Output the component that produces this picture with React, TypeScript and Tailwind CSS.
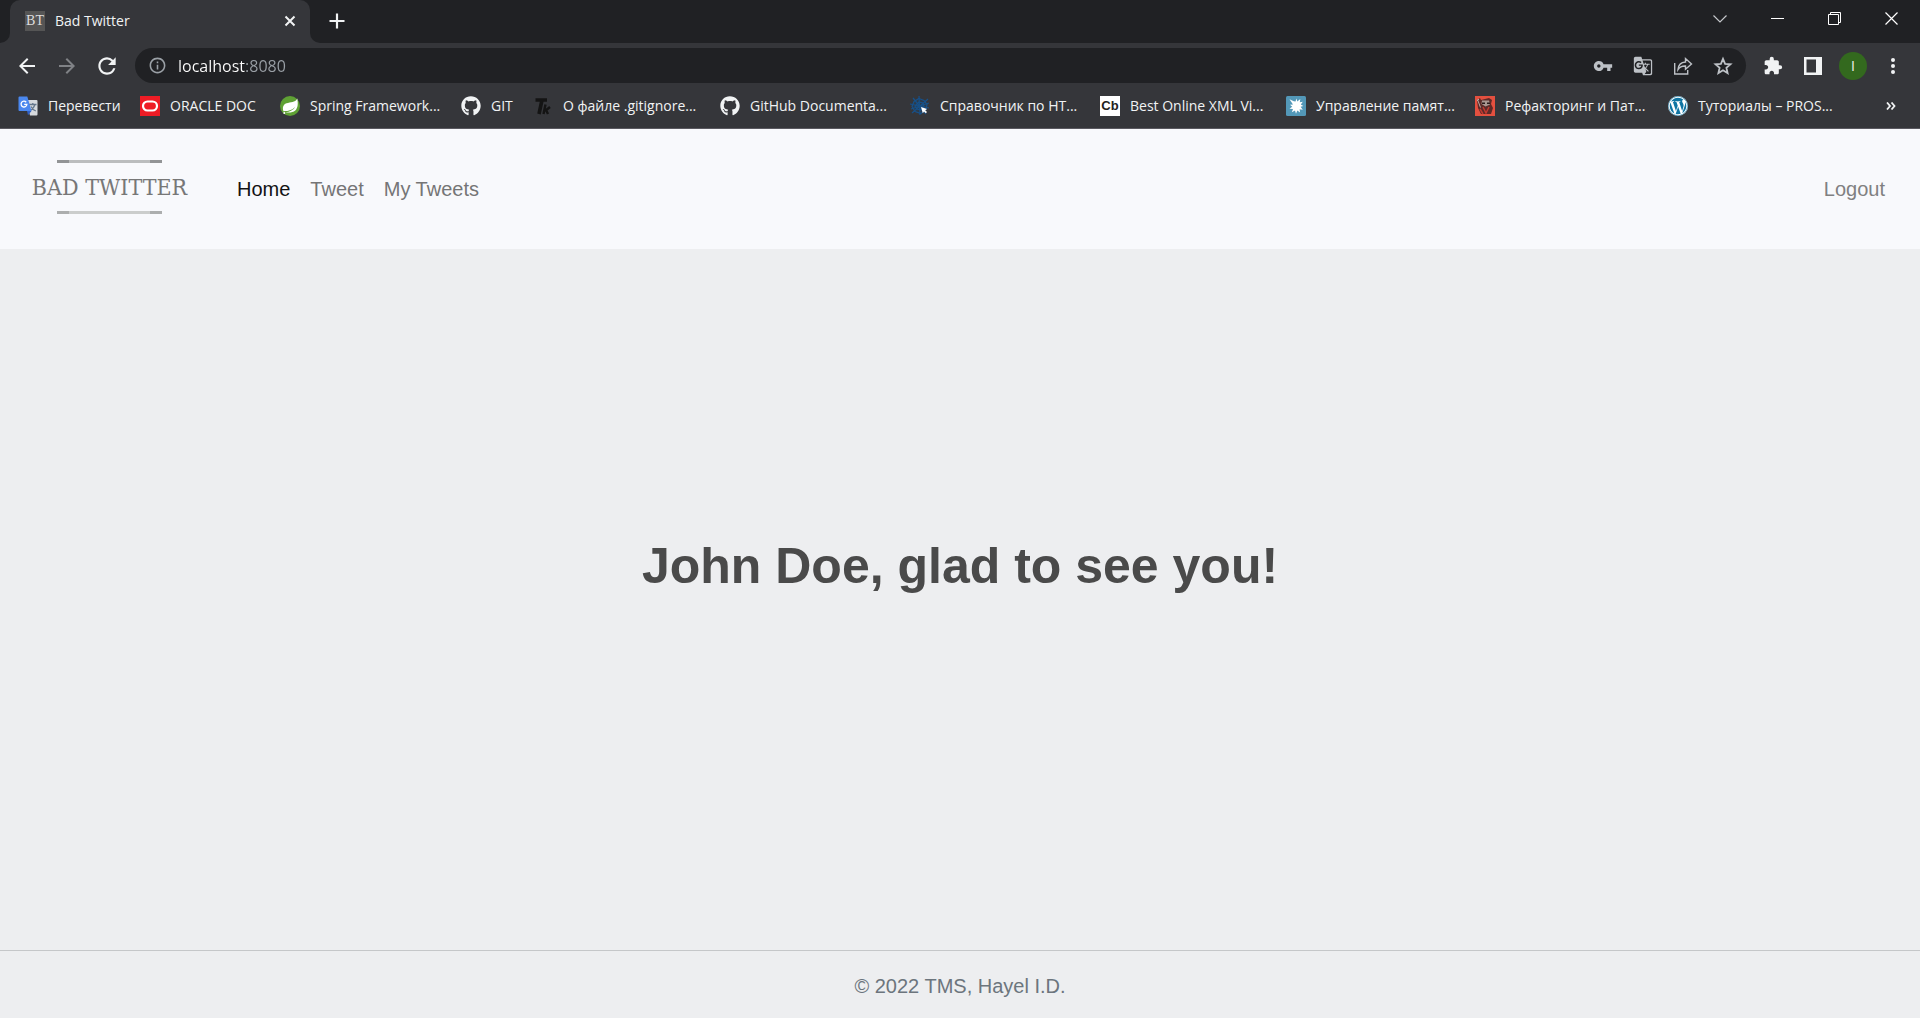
import type { ReactNode } from "react";
import {
  MdArrowBack,
  MdArrowForward,
  MdExtension,
  MdGTranslate,
  MdInfoOutline,
  MdRefresh,
  MdVpnKey,
} from "react-icons/md";
import { FaGithub, FaWordpress } from "react-icons/fa";

const uiFont = "font-['Open_Sans','Noto_Sans',sans-serif]";

function TranslateIcon() {
  return (
    <svg width="20" height="20" viewBox="0 0 20 20" aria-hidden="true">
      <path d="M8 4h10.500a1 1 0 0 1 1 1v13.500a1 1 0 0 1-1 1H12z" fill="#d6d9dd" />
      <path d="M11 8.500h7.500M14.800 7v1.500M17 8.500c-.8 3-2.800 5-5 6.500M13 10.500c1 2 2.800 3.700 4.800 4.500" fill="none" stroke="#66788c" strokeWidth="1.300" />
      <path d="M1.500.5h7.800L13.500 15H1.500a1 1 0 0 1-1-1V1.500a1 1 0 0 1 1-1z" fill="#4a87ee" />
      <path d="M9 15h4.500L10 19.300z" fill="#2f5fc4" />
      <path d="M8.200 6.200A2.900 2.900 0 1 0 8.900 8.300H6.200" fill="none" stroke="#fff" strokeWidth="1.300" />
    </svg>
  );
}

function OracleIcon() {
  return (
    <svg width="20" height="20" viewBox="0 0 20 20" aria-hidden="true">
      <rect width="20" height="20" fill="#ee1c25" />
      <rect x="3" y="5.500" width="14" height="9" rx="4.500" fill="none" stroke="#fff" strokeWidth="2.200" />
    </svg>
  );
}

function SpringIcon() {
  return (
    <svg width="20" height="20" viewBox="0 0 20 20" aria-hidden="true">
      <circle cx="10" cy="10" r="10" fill="#5fa134" />
      <path d="M17.300 2.500c.8 4.500.9 9.300-2 12-2.500 2.300-6.500 2.300-9.800 1.800 4.500-.5 8-2.300 9.800-5.500-2.800 3-6 4.300-11.800 4.500C2.200 12 3 8.500 6.500 7.300c4-1.300 8.500-.5 10.800-4.800z" fill="#fff" />
      <circle cx="4.300" cy="17" r="1" fill="#fff" />
    </svg>
  );
}

function TkIcon() {
  return (
    <svg width="20" height="20" viewBox="0 0 20 20" fill="none" stroke="#141414" aria-hidden="true">
      <path d="M2.500 4H14M9 4L6 18" strokeWidth="3.600" />
      <path d="M12.500 8.500l-2 9.500M17 11l-5 4M13 14l2 4" strokeWidth="2.400" />
    </svg>
  );
}

function WebIcon() {
  return (
    <svg width="20" height="20" viewBox="0 0 20 20" aria-hidden="true">
      <g fill="none" stroke="#17518a" strokeWidth="1.200">
        <path d="M9 0l1 19M0 8l19 4M3 2l13 16M18 3L2 17M1 13L19 7" />
        <path d="M9 2.500l5 2 3 4-1 5-5 4-6-2-3-5 2-5z" fill="#174a7b" fillOpacity=".25" />
        <path d="M9 6l4 1 1 4-3 3-4-1-2-3z" />
      </g>
      <path d="M11 11l6 2-1.800 1.200 1.800 1.800-1.200 1.200-1.800-1.800-1.200 1.800z" fill="#fff" />
    </svg>
  );
}

function CbIcon() {
  return (
    <span aria-hidden="true" className="flex h-5 w-5 items-center justify-center bg-white font-['Liberation_Sans',sans-serif] text-[13px] font-bold text-[#222]">
      Cb
    </span>
  );
}

function SplashIcon() {
  return (
    <svg width="20" height="20" viewBox="0 0 20 20" aria-hidden="true">
      <rect width="20" height="20" rx="1.500" fill="#5398b8" />
      <path d="M9.500 5.500l1-3 .8 3 3-2.500-.5 3.200 3-.5-2 2.800 2.500 1.500-2.700.7 2.200 3-3.200-.5.5 3.300-2.800-2-1.300 3.300-1-3.200-3.200 1.700 1.200-3.300-3.500-.3 2.700-2-2.200-2 3-.3L3.500 3.200l4.300 2z" fill="#fff" />
    </svg>
  );
}

function RaccoonIcon() {
  return (
    <svg width="20" height="20" viewBox="0 0 20 20" aria-hidden="true">
      <rect width="20" height="20" fill="#e4503f" />
      <path d="M2 4l3-2 1 2 4-1 4-1 3 2-1 4 2 4-2 6H6L3 12z" fill="#5c2a28" />
      <path d="M7 4.500h7l1 4-4.500 2L6.500 8z" fill="#a89690" />
      <path d="M7 6.500h3v1.500H7zM12 6.500h3v1.500h-3z" fill="#2a1a1a" />
      <path d="M8 11l3 6 3-6M5 13l3 5" stroke="#c23a31" strokeWidth="1.500" fill="none" />
      <path d="M2.500 3.500l3 8M2 5l2-2" stroke="#b9aaa5" fill="none" />
    </svg>
  );
}

function WordpressIcon() {
  return (
    <span className="flex h-5 w-5 items-center justify-center rounded-full bg-white text-[#0f75a3]">
      <FaWordpress size={20} aria-hidden="true" />
    </span>
  );
}

const github = <FaGithub size={20} aria-hidden="true" />;

const bookmarks: { label: string; width: string; icon: ReactNode }[] = [
  { label: "Перевести", width: "w-[102px]", icon: <TranslateIcon /> },
  { label: "ORACLE DOC", width: "w-[120px]", icon: <OracleIcon /> },
  { label: "Spring Framework...", width: "w-[161px]", icon: <SpringIcon /> },
  { label: "GIT", width: "w-[52px]", icon: github },
  { label: "О файле .gitignore...", width: "w-[167px]", icon: <TkIcon /> },
  { label: "GitHub Documenta...", width: "w-[170px]", icon: github },
  { label: "Справочник по HT...", width: "w-[170px]", icon: <WebIcon /> },
  { label: "Best Online XML Vi...", width: "w-[166px]", icon: <CbIcon /> },
  { label: "Управление памят...", width: "w-[169px]", icon: <SplashIcon /> },
  { label: "Рефакторинг и Пат...", width: "w-[173px]", icon: <RaccoonIcon /> },
  { label: "Туториалы – PROS...", width: "w-[170px]", icon: <WordpressIcon /> },
];

function IconButton({ label, children }: { label: string; children: ReactNode }) {
  return (
    <button type="button" aria-label={label} className="flex h-5 w-5 items-center justify-center">
      {children}
    </button>
  );
}

function TabStrip() {
  return (
    <div className="flex h-[43px] bg-[#202124]">
      <div className="flex w-[10px] bg-[#35363a]">
        <div className="w-full rounded-br-[10px] bg-[#202124]" />
      </div>
      <div className="flex w-[300px] items-center rounded-t-[10px] bg-[#35363a] pr-[10px] pb-0.5 pl-[15px]">
        <span aria-hidden="true" className="flex h-5 w-5 items-center justify-center bg-[#555] font-['Liberation_Serif',serif] text-[14px] text-[#ddd]">
          BT
        </span>
        <span className="ml-[10px] flex-1 text-[14px] text-[#f1f3f4]">Bad Twitter</span>
        <IconButton label="Close tab">
          <svg width="12" height="12" viewBox="0 0 12 12" stroke="#f1f3f4" strokeWidth="2">
            <path d="M1.500 1.500l9 9M10.500 1.500l-9 9" />
          </svg>
        </IconButton>
      </div>
      <div className="flex w-[10px] bg-[#35363a]">
        <div className="w-full rounded-bl-[10px] bg-[#202124]" />
      </div>
      <div className="ml-[7px] flex items-center pb-0.5">
        <IconButton label="New tab">
          <svg width="16" height="16" viewBox="0 0 16 16" stroke="#f1f3f4" strokeWidth="2.200">
            <path d="M8 .5v15M.5 8h15" />
          </svg>
        </IconButton>
      </div>
      <div className="mr-[19px] ml-auto flex h-9 items-center gap-[37px] pt-px">
        <IconButton label="Search tabs">
          <svg width="14" height="8" viewBox="0 0 14 8" fill="none" stroke="#c4c7cb" strokeWidth="1.200">
            <path d="M.5 .5L7 7l6.500-6.500" />
          </svg>
        </IconButton>
        <IconButton label="Minimize">
          <svg width="13" height="1" viewBox="0 0 13 1"><rect width="13" height="1" fill="#fff" /></svg>
        </IconButton>
        <IconButton label="Restore">
          <svg width="13" height="13" viewBox="0 0 13 13" fill="none" stroke="#fff">
            <path d="M.5 2.500h10v10H.5zM2.500 2.500v-2h10v10h-2" />
          </svg>
        </IconButton>
        <IconButton label="Close window">
          <svg width="13" height="13" viewBox="0 0 13 13" stroke="#fff" strokeWidth="1.200">
            <path d="M.5.5l12 12M12.500.5l-12 12" />
          </svg>
        </IconButton>
      </div>
    </div>
  );
}

function Toolbar() {
  return (
    <div className="flex h-[45px] items-center bg-[#35363a] px-[17px]">
      <div className="flex gap-5 text-[#f1f3f4]">
        <IconButton label="Back"><MdArrowBack size={24} className="shrink-0" /></IconButton>
        <IconButton label="Forward"><MdArrowForward size={24} className="shrink-0 text-[#808286]" /></IconButton>
        <IconButton label="Reload"><MdRefresh size={26} className="shrink-0" /></IconButton>
      </div>
      <div className="mr-[17px] ml-[18px] flex h-[35px] flex-1 items-center rounded-full bg-[#202124] px-[13px]">
        <MdInfoOutline size={19} className="text-[#9aa0a6]" aria-hidden="true" />
        <input
          type="text"
          aria-label="Address"
          defaultValue="localhost:8080"
          className="ml-[11px] min-w-0 flex-1 bg-[linear-gradient(to_right,#ffffff_67px,#9aa0a6_67px)] bg-clip-text text-[16px] text-transparent outline-none"
        />
        <div className="flex gap-5 text-[#bdc1c6]">
          <IconButton label="Passwords"><MdVpnKey size={20} /></IconButton>
          <IconButton label="Translate page"><MdGTranslate size={20} /></IconButton>
          <IconButton label="Share">
            <svg width="20" height="20" viewBox="0 0 20 20" fill="none" stroke="currentColor" strokeWidth="1.400">
              <path d="M1.700 7v11h13v-4M5 13.500c.4-5 3-7.200 7.500-7.500V2.500L18.500 8l-6 5.200V10c-3.500-.2-5.700.8-7.500 3.500z" />
            </svg>
          </IconButton>
          <IconButton label="Bookmark">
            <svg width="20" height="20" viewBox="0 0 20 20" fill="none" stroke="currentColor" strokeWidth="1.800">
              <path d="M10 2.800l2.100 5 5.400.5-4.100 3.500 1.200 5.300L10 14.300l-4.600 2.800 1.200-5.300-4.100-3.500 5.400-.5z" />
            </svg>
          </IconButton>
        </div>
      </div>
      <div className="flex items-center gap-5 text-[#f1f3f4]">
        <IconButton label="Extensions"><MdExtension size={20} /></IconButton>
        <IconButton label="Side panel">
          <svg width="18" height="18" viewBox="0 0 18 18" fill="currentColor">
            <path fillRule="evenodd" d="M0 0h18v18H0zM2.500 2.500v13H12v-13z" />
          </svg>
        </IconButton>
        <button type="button" aria-label="Profile" className="-mx-1 flex h-7 w-7 items-center justify-center rounded-full bg-[#33691e] text-[14px]">
          I
        </button>
        <IconButton label="Menu">
          <svg width="4" height="16" viewBox="0 0 4 16" fill="currentColor">
            <circle cx="2" cy="2" r="2" /><circle cx="2" cy="8" r="2" /><circle cx="2" cy="14" r="2" />
          </svg>
        </IconButton>
      </div>
    </div>
  );
}

function BookmarksBar() {
  return (
    <div className="flex h-[41px] items-center gap-5 overflow-hidden border-b border-[#5a5960] bg-[#35363a] pr-[24px] pb-[5px] pl-[18px] text-[14px] whitespace-nowrap text-[#f1f3f4]">
      {bookmarks.map((b) => (
        <a key={b.label} href="#" className={`flex shrink-0 items-center gap-[10px] ${b.width}`}>
          <span className="flex h-5 w-5 items-center justify-center">{b.icon}</span>
          {b.label}
        </a>
      ))}
      <button type="button" aria-label="More bookmarks" className="ml-auto">
        <svg width="10" height="8" viewBox="0 0 10 8" fill="none" stroke="#f1f3f4" strokeWidth="1.800">
          <path d="M1 .5L4 4 1 7.500M5.500.5l3 3.500-3 3.500" />
        </svg>
      </button>
    </div>
  );
}

function Logo() {
  return (
    <a href="#" className="flex w-[151px] flex-col items-center pb-1 text-[#777]">
      <span className="flex h-[3px] w-[105px] bg-[#bbbdbe]">
        <span className="h-full w-3 bg-[#929496]" />
        <span className="ml-auto h-full w-3 bg-[#929496]" />
      </span>
      <span className="my-2 font-['DejaVu_Serif_Condensed','DejaVu_Serif',serif] text-[23px] leading-8 whitespace-nowrap">BAD TWITTER</span>
      <span className="flex h-[3px] w-[105px] bg-[#cbcdcc]">
        <span className="h-full w-3 bg-[#acaeae]" />
        <span className="ml-auto h-full w-3 bg-[#acaeae]" />
      </span>
    </a>
  );
}

export default function App() {
  return (
    <div className="flex min-h-screen flex-col bg-[#edeef0] font-['Liberation_Sans',Arial,sans-serif]">
      <div className={uiFont}>
        <TabStrip />
        <Toolbar />
        <BookmarksBar />
      </div>
      <header className="flex h-[120px] items-center bg-[#f8f9fc] pr-[35px] pl-[34px] text-[20px] text-[#757576]">
        <Logo />
        <nav className="ml-[52px] flex flex-1 gap-5">
          <a href="#" aria-current="page" className="text-[#121213]">Home</a>
          <a href="#">Tweet</a>
          <a href="#">My Tweets</a>
          <a href="#" className="ml-auto text-[#808081]">Logout</a>
        </nav>
      </header>
      <main className="flex flex-1 items-center justify-center pb-[68px]">
        <h1 className="text-[50px] leading-[60px] font-bold text-[#4a4a4a]">John Doe, glad to see you!</h1>
      </main>
      <footer className="border-t border-[#c5c7c9] pt-5 pb-[17px] text-center text-[20px] leading-[30px] text-[#6c757d]">
        © 2022 TMS, Hayel I.D.
      </footer>
    </div>
  );
}
